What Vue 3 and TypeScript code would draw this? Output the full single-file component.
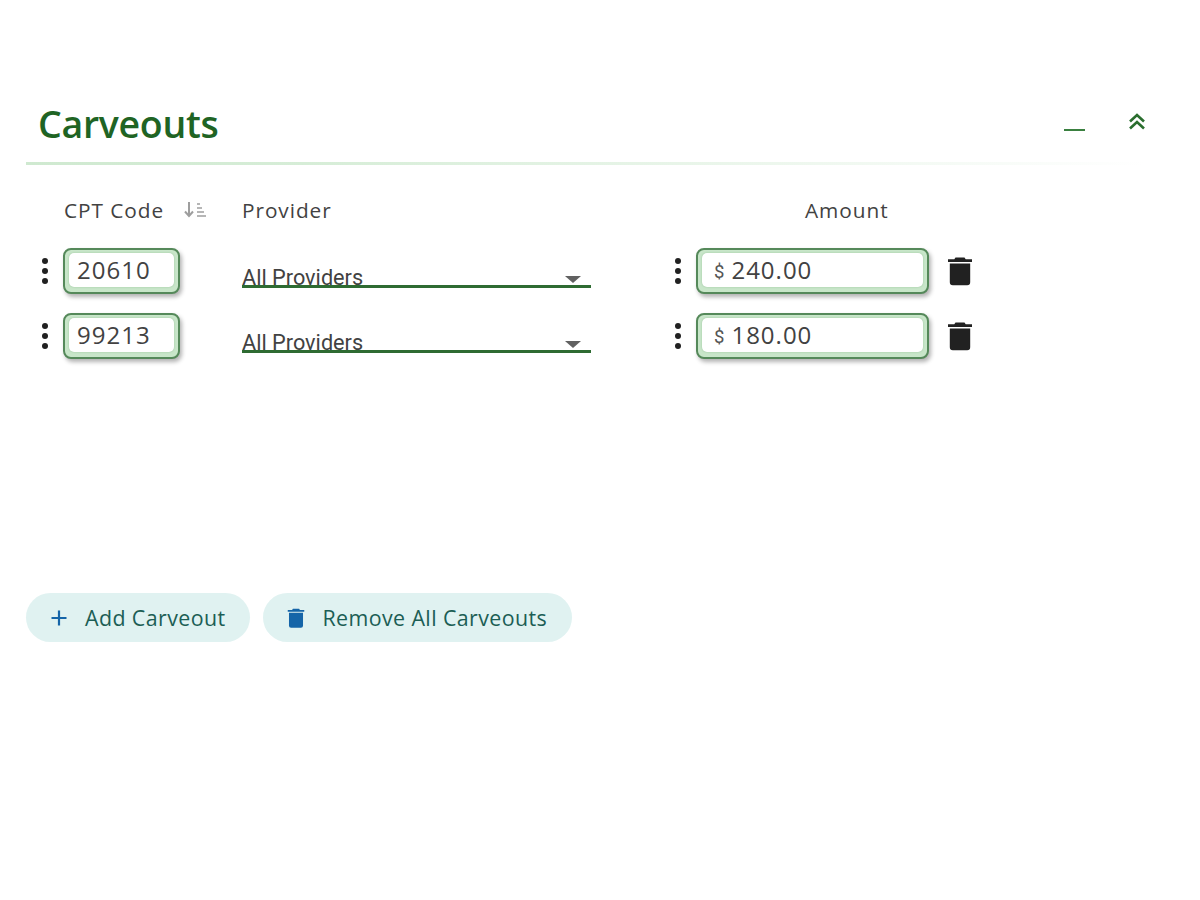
<script setup lang="ts">
interface Row { code: string; amount: string }
const rows: Row[] = [
  { code: '20610', amount: '240.00' },
  { code: '99213', amount: '180.00' },
]
</script>

<template>
  <main class="page">
    <header class="head">
      <h1 class="title">Carveouts</h1>
      <div class="head-actions">
        <span class="minimize"></span>
        <svg class="chev" width="24" height="24" viewBox="0 0 24 24" fill="none" stroke="#2a6e2e" stroke-width="2.600">
          <path d="M5 11.500 12 5l7 6.500" />
          <path d="M5 18.500 12 12l7 6.500" />
        </svg>
      </div>
    </header>
    <div class="rule"></div>

    <section class="table">
      <div class="labels">
        <div class="label code-label">
          <span>CPT Code</span>
          <svg class="sort" width="22" height="20" viewBox="0 0 22 20" fill="none" stroke="#9e9e9e" stroke-width="1.500">
            <path d="M5 2v14" stroke-width="2" />
            <path d="M1 11.500 5 16l4-4.500" stroke-width="2" />
            <path d="M13 4h3M13 8h5M13 12h7M13 16h9" />
          </svg>
        </div>
        <div class="label provider-label">Provider</div>
        <div class="label amount-label">Amount</div>
      </div>

      <div v-for="row in rows" :key="row.code" class="row">
        <div class="dots"><i></i><i></i><i></i></div>
        <div class="field code-field">
          <div class="field-inner">{{ row.code }}</div>
        </div>
        <div class="select">
          <span class="select-text">All Providers</span>
          <span class="caret"></span>
        </div>
        <div class="dots dots-amount"><i></i><i></i><i></i></div>
        <div class="field amount-field">
          <div class="field-inner"><span class="cur">$</span>{{ row.amount }}</div>
        </div>
        <svg class="trash" width="26" height="32" viewBox="0 0 26 32" fill="#212121">
          <path d="M8.500 2.500h9l1.200 1.800H25v2.700H1V4.300h6.300z" />
          <path d="M2.800 8.500h20.400v18.700a3 3 0 0 1-3 3H5.800a3 3 0 0 1-3-3z" />
        </svg>
      </div>
    </section>

    <div class="buttons">
      <button class="btn add" type="button">
        <svg width="18" height="18" viewBox="0 0 18 18" fill="none" stroke="#1565a8" stroke-width="2.200">
          <path d="M9 1.500v15M1.500 9h15" />
        </svg>
        <span>Add Carveout</span>
      </button>
      <button class="btn remove" type="button">
        <svg width="18" height="22" viewBox="0 0 26 32" fill="#1565a8">
          <path d="M8.500 2.500h9l1.200 1.800H25v2.700H1V4.300h6.300z" />
          <path d="M2.800 8.500h20.400v18.700a3 3 0 0 1-3 3H5.800a3 3 0 0 1-3-3z" />
        </svg>
        <span>Remove All Carveouts</span>
      </button>
    </div>
  </main>
</template>

<style>
html, body { background: #fff; }
</style>

<style scoped>
.page {
  width: 1200px;
  height: 900px;
  box-sizing: border-box;
  padding: 100px 54px 0 26px;
  font-family: "Open Sans", "Noto Sans", sans-serif;
  color: #424242;
}
.head {
  display: flex;
  justify-content: space-between;
  align-items: center;
  height: 62px;
}
.title {
  margin: 0 0 14px 12px;
  font-size: 37.500px;
  line-height: 48px;
  font-weight: 600;
  color: #1f6424;
  letter-spacing: -0.300px;
}
.head-actions {
  display: flex;
  align-items: flex-start;
  gap: 40px;
  height: 62px;
  transform: translateX(3px);
}
.minimize {
  display: block;
  width: 21px;
  height: 2px;
  margin-top: 29px;
  margin-left: 1px;
  background: #3a8040;
}
.chev { margin-top: 10px; }
.rule {
  height: 3px;
  background: linear-gradient(90deg, #cfe9d0, #d6edd7 25%, rgba(214, 237, 215, 0));
}
.table { padding-top: 33px; }
.labels {
  display: flex;
  height: 26px;
  font-size: 20.800px;
  line-height: 24px;
  letter-spacing: 0.950px;
  margin-bottom: 24px;
}
.label { white-space: nowrap; }
.code-label {
  display: flex;
  align-items: flex-start;
  margin-left: 38px;
  width: 178px;
  gap: 20px;
}
.sort { flex: none; margin-top: 2px; }
.provider-label { width: 563px; }
.row {
  display: flex;
  align-items: flex-start;
  height: 65px;
}
.dots {
  display: flex;
  flex-direction: column;
  justify-content: center;
  align-items: center;
  gap: 4px;
  width: 37px;
  height: 46px;
}
.dots i {
  display: block;
  width: 6px;
  height: 6px;
  border-radius: 50%;
  background: #212121;
}
.dots-amount {
  width: 13px;
  margin-left: 80px;
  margin-right: 12px;
}
.field {
  box-sizing: border-box;
  height: 46px;
  border: 2px solid #55895a;
  border-radius: 8px;
  background: #c8e6c9;
  padding: 3px 4px 5px 4px;
  box-shadow: 2px 3px 4px rgba(0, 0, 0, 0.3);
}
.field-inner {
  height: 100%;
  box-sizing: border-box;
  border-radius: 5px;
  background: #fff;
  box-shadow: 0 0 2px rgba(120, 170, 125, 0.6);
  font-size: 24px;
  line-height: 33px;
  letter-spacing: 1px;
  padding-left: 8px;
  white-space: nowrap;
}
.code-field { width: 117px; }
.amount-field { width: 233px; }
.amount-field .field-inner { padding-left: 12px; }
.cur {
  font-family: Roboto, "Liberation Sans", sans-serif;
  font-size: 18.500px;
  margin-right: 7px;
  letter-spacing: 0;
  color: #555;
  vertical-align: 1px;
}
.select {
  position: relative;
  box-sizing: border-box;
  width: 349px;
  height: 40px;
  margin-left: 62px;
  flex: none;
}
.select::after {
  content: "";
  position: absolute;
  left: 0;
  right: 0;
  bottom: 0;
  height: 3px;
  background: #2e6b32;
}
.select-text {
  position: absolute;
  left: 0;
  top: 17px;
  font-family: Roboto, "Liberation Sans", sans-serif;
  font-size: 21.700px;
  line-height: 26px;
  color: #424242;
}
.caret {
  position: absolute;
  right: 10px;
  top: 28px;
  width: 0;
  height: 0;
  border-left: 8px solid transparent;
  border-right: 8px solid transparent;
  border-top: 7px solid #616161;
}
.trash {
  flex: none;
  margin-left: 18px;
  margin-top: 7px;
}
.buttons {
  display: flex;
  gap: 13px;
  margin-top: 215px;
}
.btn {
  display: flex;
  align-items: center;
  height: 49px;
  padding: 0 25px 0 24px;
  gap: 17px;
  border: none;
  border-radius: 25px;
  background: #e0f2f1;
  color: #1c5e55;
  font-family: "Open Sans", "Noto Sans", sans-serif;
  font-size: 21.400px;
  letter-spacing: 0.400px;
  white-space: nowrap;
}
</style>
